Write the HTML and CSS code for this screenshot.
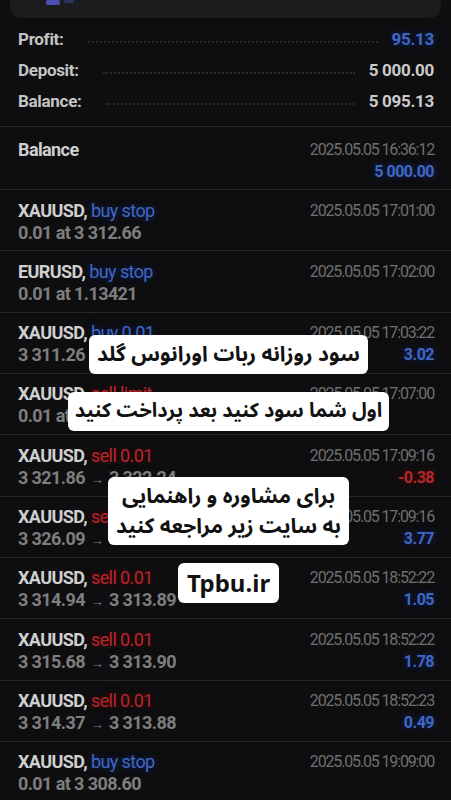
FILE: index.html
```html
<!DOCTYPE html>
<html lang="en">
<head>
    <meta charset="UTF-8">
    <meta name="viewport" content="width=device-width, initial-scale=1.0">
    <title>History</title>
    <link rel="stylesheet" href="styles.css">
</head>
<body>
    <div class="top-card">
        <svg class="top-icon" width="32" height="8" viewBox="0 0 32 8">
            <rect x="0" y="0" width="14" height="5" rx="1.5" fill="#4a4fb0"/>
            <rect x="18" y="0" width="10" height="3" rx="1.5" fill="#2e3266"/>
        </svg>
    </div>

    <div class="summary">
        <div class="sum-row">
            <span class="label">Profit:</span>
            <span class="dots"></span>
            <span class="value blue">95.13</span>
        </div>
        <div class="sum-row">
            <span class="label">Deposit:</span>
            <span class="dots"></span>
            <span class="value">5 000.00</span>
        </div>
        <div class="sum-row">
            <span class="label">Balance:</span>
            <span class="dots"></span>
            <span class="value">5 095.13</span>
        </div>
    </div>

    <div class="deal balance-deal">
        <div class="line">
            <span class="name">Balance</span>
            <span class="date">2025.05.05 16:36:12</span>
        </div>
        <div class="line">
            <span></span>
            <span class="amount blue">5 000.00</span>
        </div>
    </div>

    <div class="deal">
        <div class="line">
            <span class="name">XAUUSD, <span class="blue">buy stop</span></span>
            <span class="date">2025.05.05 17:01:00</span>
        </div>
        <div class="line">
            <span class="price">0.01 at 3 312.66</span>
        </div>
    </div>

    <div class="deal">
        <div class="line">
            <span class="name">EURUSD, <span class="blue">buy stop</span></span>
            <span class="date">2025.05.05 17:02:00</span>
        </div>
        <div class="line">
            <span class="price">0.01 at 1.13421</span>
        </div>
    </div>

    <div class="deal">
        <div class="line">
            <span class="name">XAUUSD, <span class="blue">buy 0.01</span></span>
            <span class="date">2025.05.05 17:03:22</span>
        </div>
        <div class="line">
            <span class="price">3 311.26 <span class="arrow">→</span> 3 314.28</span>
            <span class="amount blue">3.02</span>
        </div>
    </div>

    <div class="deal">
        <div class="line">
            <span class="name">XAUUSD, <span class="red">sell limit</span></span>
            <span class="date">2025.05.05 17:07:00</span>
        </div>
        <div class="line">
            <span class="price">0.01 at 3 322.00</span>
        </div>
    </div>

    <div class="deal">
        <div class="line">
            <span class="name">XAUUSD, <span class="red">sell 0.01</span></span>
            <span class="date">2025.05.05 17:09:16</span>
        </div>
        <div class="line">
            <span class="price">3 321.86 <span class="arrow">→</span> 3 322.24</span>
            <span class="amount red">-0.38</span>
        </div>
    </div>

    <div class="deal">
        <div class="line">
            <span class="name">XAUUSD, <span class="red">sell 0.01</span></span>
            <span class="date">2025.05.05 17:09:16</span>
        </div>
        <div class="line">
            <span class="price">3 326.09 <span class="arrow">→</span> 3 322.32</span>
            <span class="amount blue">3.77</span>
        </div>
    </div>

    <div class="deal">
        <div class="line">
            <span class="name">XAUUSD, <span class="red">sell 0.01</span></span>
            <span class="date">2025.05.05 18:52:22</span>
        </div>
        <div class="line">
            <span class="price">3 314.94 <span class="arrow">→</span> 3 313.89</span>
            <span class="amount blue">1.05</span>
        </div>
    </div>

    <div class="deal">
        <div class="line">
            <span class="name">XAUUSD, <span class="red">sell 0.01</span></span>
            <span class="date">2025.05.05 18:52:22</span>
        </div>
        <div class="line">
            <span class="price">3 315.68 <span class="arrow">→</span> 3 313.90</span>
            <span class="amount blue">1.78</span>
        </div>
    </div>

    <div class="deal">
        <div class="line">
            <span class="name">XAUUSD, <span class="red">sell 0.01</span></span>
            <span class="date">2025.05.05 18:52:23</span>
        </div>
        <div class="line">
            <span class="price">3 314.37 <span class="arrow">→</span> 3 313.88</span>
            <span class="amount blue">0.49</span>
        </div>
    </div>

    <div class="deal">
        <div class="line">
            <span class="name">XAUUSD, <span class="blue">buy stop</span></span>
            <span class="date">2025.05.05 19:09:00</span>
        </div>
        <div class="line">
            <span class="price">0.01 at 3 308.60</span>
        </div>
    </div>

    <div class="captions" dir="rtl">
        <div class="caption">سود روزانه ربات اورانوس گلد</div>
        <div class="caption narrow">اول شما سود کنید بعد پرداخت کنید</div>
        <div class="caption two-lines">برای مشاوره و راهنمایی<br>به سایت زیر مراجعه کنید</div>
        <div class="caption site">Tpbu.ir</div>
    </div>
</body>
</html>
```

FILE: styles.css
```css
body {
    margin: 0;
    background-color: #0e0e10;
    font-family: Roboto, "Liberation Sans", sans-serif;
    color: #cfcfcf;
    position: relative;
    height: 800px;
    overflow: hidden;
}
.top-card {
    height: 18px;
    margin: 0 10px;
    background: #1c1c1e;
    border-radius: 0 0 12px 12px;
    position: relative;
}
.top-icon {
    position: absolute;
    left: 36px;
    top: 0;
}
.summary {
    padding: 5px 17px 10px 18px;
    border-bottom: 1px solid #262628;
}
.sum-row {
    display: flex;
    align-items: center;
    height: 31px;
    font-size: 17px;
}
.label {
    font-weight: bold;
    color: #c4c4c4;
    letter-spacing: -0.3px;
}
.dots {
    flex: 1;
    margin: 6px 14px 0 24px;
    border-bottom: 2px dotted #2a2a2d;
}
.value {
    font-weight: bold;
    color: #cbcbcb;
    letter-spacing: -0.3px;
}
.deal {
    padding: 9px 17px 7.33px 18px;
    border-bottom: 1px solid #262628;
}
.balance-deal {
    padding: 11px 17px 7px 18px;
}
.line {
    display: flex;
    justify-content: space-between;
    align-items: center;
    height: 22px;
}
.name {
    font-size: 18px;
    font-weight: bold;
    color: #cfcfcf;
    letter-spacing: -0.6px;
}
.name span {
    font-weight: normal;
}
.price {
    font-size: 18px;
    font-weight: bold;
    color: #7e7e7e;
    letter-spacing: -0.6px;
}
.arrow {
    font-size: 13px;
    font-weight: normal;
    margin: 0 2px;
}
.date {
    font-size: 16px;
    color: #6f6f6f;
    letter-spacing: -1.15px;
}
.amount {
    font-size: 16px;
    font-weight: bold;
    letter-spacing: -0.5px;
}
.blue {
    color: #3f68c4;
    text-shadow: 0 0 6px rgba(20, 50, 150, 0.7);
}
.red {
    color: #b8262a;
    text-shadow: 0 0 6px rgba(120, 10, 10, 0.6);
}
.captions {
    position: absolute;
    top: 335px;
    left: 0;
    width: 457px;
    display: flex;
    flex-direction: column;
    align-items: center;
    gap: 18px;
    font-family: "Noto Sans Arabic", Vazirmatn, "DejaVu Sans", sans-serif;
}
.caption {
    background: #ffffff;
    color: #111111;
    border-radius: 6px;
    font-size: 21px;
    font-weight: bold;
    line-height: 39px;
    padding: 0 8px;
    text-align: center;
}
.narrow {
    font-size: 20px;
    padding: 0 7px;
}
.two-lines {
    margin-top: 28px;
    line-height: 30px;
    padding: 4px 8px;
}
.site {
    font-family: "Noto Sans", "Open Sans", sans-serif;
    font-size: 24px;
    line-height: 40px;
    padding: 0 9px;
}
```
